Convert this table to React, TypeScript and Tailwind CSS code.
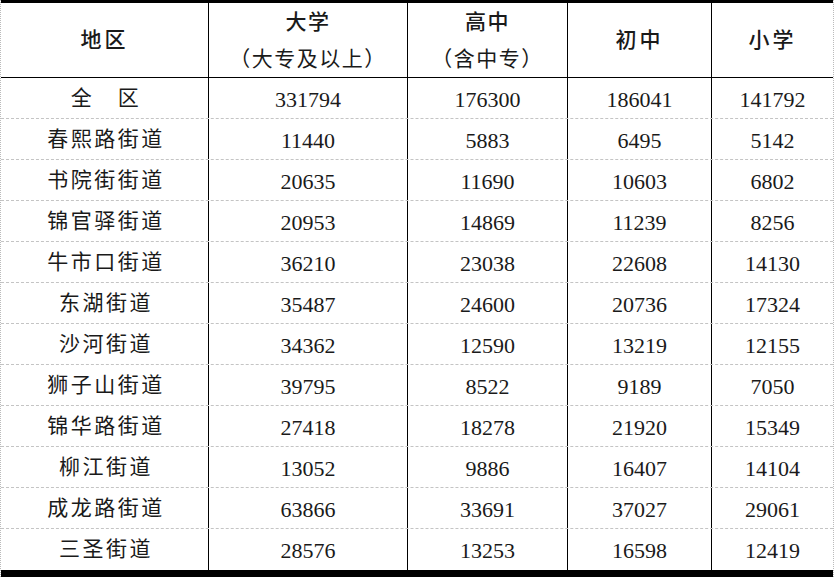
import React from "react";

const rows: [string, string, string, string, string][] = [
  ["全　区", "331794", "176300", "186041", "141792"],
  ["春熙路街道", "11440", "5883", "6495", "5142"],
  ["书院街街道", "20635", "11690", "10603", "6802"],
  ["锦官驿街道", "20953", "14869", "11239", "8256"],
  ["牛市口街道", "36210", "23038", "22608", "14130"],
  ["东湖街道", "35487", "24600", "20736", "17324"],
  ["沙河街道", "34362", "12590", "13219", "12155"],
  ["狮子山街道", "39795", "8522", "9189", "7050"],
  ["锦华路街道", "27418", "18278", "21920", "15349"],
  ["柳江街道", "13052", "9886", "16407", "14104"],
  ["成龙路街道", "63866", "33691", "37027", "29061"],
  ["三圣街道", "28576", "13253", "16598", "12419"],
];

const font = { fontFamily: '"Liberation Serif", "Noto Sans CJK SC", serif' };

export default function App() {
  return (
    <div
      className="w-[834px] h-[577px] bg-white text-[#1a1a1a] flex flex-col border-l border-r border-dotted border-l-[#bbbbbb] border-r-[#bbbbbb]"
      style={font}
    >
      <div className="h-[3px] bg-black shrink-0" />
      {/* header */}
      <div className="flex h-[75px] border-b border-black shrink-0">
        <div className="w-[208px] border-r border-black flex items-center justify-center text-[21px] font-medium tracking-[3px] pt-[2px]">
          地区
        </div>
        <div className="w-[199px] border-r border-black flex flex-col items-center justify-center text-[21px] leading-[37px] tracking-[1.5px] pt-[2px]">
          <span className="font-medium">大学</span>
          <span>（大专及以上）</span>
        </div>
        <div className="w-[160px] border-r border-black flex flex-col items-center justify-center text-[21px] leading-[37px] tracking-[1.5px] pt-[2px]">
          <span className="font-medium">高中</span>
          <span>（含中专）</span>
        </div>
        <div className="w-[144px] border-r border-black flex items-center justify-center text-[21px] font-medium tracking-[3px] pt-[2px]">
          初中
        </div>
        <div className="flex-1 flex items-center justify-center text-[21px] font-medium tracking-[3px] pt-[2px]">
          小学
        </div>
      </div>
      {rows.map((r, i) => (
        <div
          key={i}
          className={
            "flex h-[41px] shrink-0 " +
            (i < rows.length - 1 ? "border-b border-dashed border-[#c4c4c4]" : "")
          }
        >
          <div className="w-[208px] border-r border-black flex items-center justify-center text-[21px] tracking-[2.5px] pl-[3px] pt-[1px]">
            {r[0]}
          </div>
          <div className="w-[199px] border-r border-black flex items-center justify-center text-[22px] pt-[2px]">
            {r[1]}
          </div>
          <div className="w-[160px] border-r border-black flex items-center justify-center text-[22px] pt-[2px]">
            {r[2]}
          </div>
          <div className="w-[144px] border-r border-black flex items-center justify-center text-[22px] pt-[2px]">
            {r[3]}
          </div>
          <div className="flex-1 flex items-center justify-center text-[22px] pt-[2px]">{r[4]}</div>
        </div>
      ))}
      <div className="flex-1 bg-black" />
    </div>
  );
}
